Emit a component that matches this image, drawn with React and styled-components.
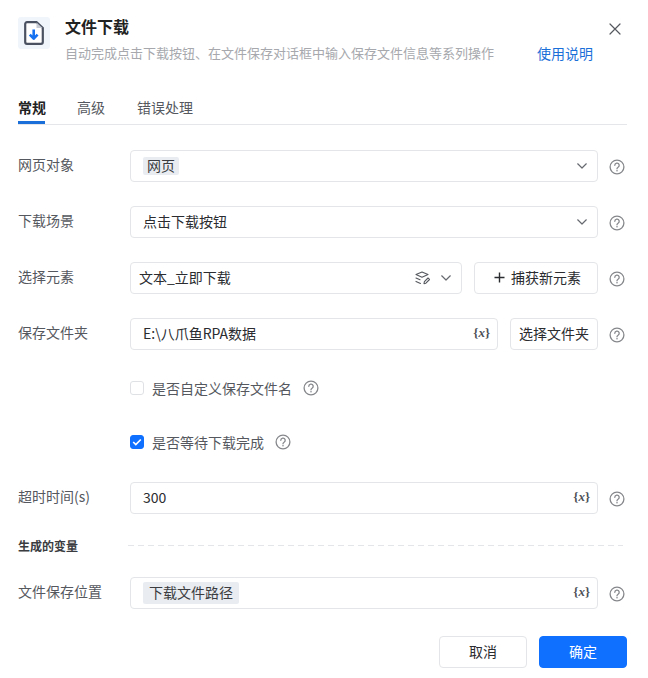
import React from "react";
import styled, { createGlobalStyle } from "styled-components";

const Global = createGlobalStyle`
  html, body { margin: 0; padding: 0; background: #fff; }
  body { font-family: "Noto Sans CJK SC", "Noto Sans", sans-serif; }
  * { box-sizing: border-box; }
`;

const Dialog = styled.div`
  width: 648px;
  height: 678px;
  padding: 0 21px 0 18px;
  display: flex;
  flex-direction: column;
  background: #fff;
`;

const Header = styled.div`
  display: flex;
  align-items: flex-start;
  height: 88px;
  padding-top: 17px;
`;

const LogoBox = styled.div`
  width: 32px;
  height: 32px;
  border-radius: 3px;
  background: #f0f5fc;
  display: flex;
  align-items: center;
  justify-content: center;
  flex: none;
`;

const HeaderText = styled.div`
  margin-left: 15px;
  flex: 1;
  min-width: 0;
`;

const Title = styled.div`
  margin-top: -1px;
  font-size: 16px;
  line-height: 20px;
  font-weight: 700;
  color: #222;
`;

const Desc = styled.div`
  margin-top: 8px;
  font-size: 13px;
  line-height: 18px;
  color: #a6a8ad;
  white-space: nowrap;
`;

const HelpLink = styled.a`
  position: absolute;
  left: 537px;
  top: 44px;
  font-size: 14px;
  line-height: 18px;
  color: #1a6fd8;
`;

const CloseButton = styled.button`
  position: absolute;
  left: 608px;
  top: 22px;
  width: 14px;
  height: 14px;
  padding: 0;
  border: 0;
  background: none;
  display: flex;
`;

const Tabs = styled.div`
  display: flex;
  gap: 32px;
  height: 37px;
  border-bottom: 1px solid #e4e6ea;
`;

const Tab = styled.div`
  height: 36px;
  width: ${(p) => (p.$active ? "27px" : "auto")};
  padding-top: 9px;
  font-size: 14px;
  line-height: 20px;
  white-space: nowrap;
  font-weight: ${(p) => (p.$active ? 700 : 400)};
  color: ${(p) => (p.$active ? "#222" : "#55585e")};
  border-bottom: ${(p) => (p.$active ? "3px solid #1a6fd8" : "0")};
`;

const Form = styled.div`
  display: flex;
  flex-direction: column;
  padding-top: 25px;
`;

const Row = styled.div`
  display: flex;
  align-items: center;
  height: 32px;
  margin-bottom: ${(p) => p.$gap ?? 24}px;
`;

const Label = styled.div`
  width: 112px;
  flex: none;
  font-size: 14px;
  line-height: 18px;
  margin-top: -5px;
  color: #55585e;
`;

const Field = styled.div`
  flex: 1;
  min-width: 0;
  height: 32px;
  border: 1px solid #e3e5e8;
  border-radius: 4px;
  display: flex;
  align-items: center;
  padding: 0 ${(p) => p.$right ?? 10}px 0 ${(p) => p.$left ?? 12}px;
  font-size: 14px;
  color: #2a2c30;
`;

const FieldText = styled.span`
  flex: 1;
  margin-top: -2px;
  white-space: nowrap;
`;

const Tag = styled.span`
  background: #e9ecf1;
  border-radius: 2px;
  padding: 0 ${(p) => (p.$big ? 6 : 4)}px;
  height: ${(p) => (p.$big ? 22 : 18)}px;
  line-height: ${(p) => (p.$big ? 20 : 16)}px;
  color: #3a3c40;
  font-size: 14px;
  margin-right: auto;
`;

const SideButton = styled.button`
  flex: none;
  width: ${(p) => p.$width}px;
  margin-left: 12px;
  height: 32px;
  border: 1px solid #e3e5e8;
  border-radius: 4px;
  background: #fff;
  padding: 0 0 2px;
  font-family: inherit;
  font-size: 14px;
  color: #2a2c30;
  display: flex;
  align-items: center;
  justify-content: center;
  gap: 6px;
`;

const HelpSlot = styled.div`
  flex: none;
  width: 29px;
  padding-left: 11px;
  padding-top: 2px;
  display: flex;
`;

const InlineHelp = styled.span`
  flex: none;
  margin-left: 11px;
  display: flex;
`;

const CheckRow = styled.div`
  display: flex;
  align-items: center;
  height: 20px;
  margin-left: 112px;
  margin-bottom: ${(p) => p.$gap}px;
  font-size: 14px;
  color: #55585e;
`;

const Box = styled.span`
  width: 14px;
  height: 14px;
  border-radius: 3px;
  flex: none;
  margin-right: 8px;
  border: 1px solid ${(p) => (p.$on ? "#0f6fff" : "#dfe1e5")};
  background: ${(p) => (p.$on ? "#0f6fff" : "#fff")};
  display: flex;
  align-items: center;
  justify-content: center;
`;

const SectionRow = styled.div`
  display: flex;
  align-items: center;
  height: 20px;
  margin-top: -1px;
  margin-bottom: 22px;
`;

const SectionTitle = styled.div`
  width: 110px;
  flex: none;
  font-size: 12px;
  font-weight: 700;
  color: #3a3c40;
`;

const Dashes = styled.div`
  flex: 1;
  margin-right: 4px;
  height: 1px;
  background: repeating-linear-gradient(90deg, #e3e5e8 0 6px, transparent 6px 10px);
`;

const Footer = styled.div`
  display: flex;
  justify-content: flex-end;
  gap: 12px;
  margin-top: 3px;
`;

const FootButton = styled.button`
  width: 88px;
  height: 32px;
  border-radius: 4px;
  font-family: inherit;
  font-size: 14px;
  padding: 0 0 2px;
  border: 1px solid ${(p) => (p.$primary ? "#0f6fff" : "#e3e5e8")};
  background: ${(p) => (p.$primary ? "#0f6fff" : "#fff")};
  color: ${(p) => (p.$primary ? "#fff" : "#2a2c30")};
`;

const VarMark = styled.span`
  flex: none;
  font-family: "Liberation Serif", serif;
  font-size: 13px;
  font-weight: 700;
  color: #4d5056;
  margin-top: -2px;
`;

const Help = () => (
  <svg width="16" height="16" viewBox="0 0 16 16" fill="none">
    <circle cx="8" cy="8" r="6.9" stroke="#85878b" strokeWidth="1.3" />
    <path d="M5.8 6.3a2.2 2.2 0 1 1 3.3 1.9c-.7.4-1.1.8-1.1 1.6" stroke="#85878b" strokeWidth="1.3" strokeLinecap="round" />
    <circle cx="8" cy="11.7" r=".8" fill="#85878b" />
  </svg>
);

const Chevron = () => (
  <svg width="10" height="6" viewBox="0 0 10 6" fill="none" style={{ flex: "none" }}>
    <path d="M.7.8 5 5l4.3-4.2" stroke="#666a70" strokeWidth="1.2" strokeLinecap="round" strokeLinejoin="round" />
  </svg>
);

const FileLogo = () => (
  <svg width="20" height="24" viewBox="0 0 20 24" fill="none">
    <path d="M3 1.2h9.5L18.8 7v14a1.8 1.8 0 0 1-1.8 1.8H3A1.8 1.8 0 0 1 1.2 21V3A1.8 1.8 0 0 1 3 1.2Z" stroke="#4a5160" strokeWidth="2.2" fill="#fff" />
    <path d="M12.5 1.5V7h6" fill="#c5cad3" />
    <path d="M9.7 8.5v9.5M5.8 13.7l3.9 4 3.9-4" stroke="#1672f0" strokeWidth="2.6" strokeLinejoin="round" />
  </svg>
);

const LayersPick = () => (
  <svg width="16" height="14" viewBox="0 0 16 14" fill="none" style={{ flex: "none", marginRight: 10 }}>
    <path d="M1 3.6 7 1l6 2.6-6 2.6-6-2.6Z" stroke="#55585e" strokeWidth="1.1" strokeLinejoin="round" />
    <path d="M1 7l4 1.8M1 10.4l4.5 2" stroke="#55585e" strokeWidth="1.1" strokeLinecap="round" />
    <path d="m9 12.6.4-2 3.6-3.6 1.5 1.5-3.6 3.7-1.9.4Z" stroke="#55585e" strokeWidth="1.1" strokeLinejoin="round" />
  </svg>
);

const Var = () => (
  <VarMark>{"{"}<i>x</i>{"}"}</VarMark>
);

export default function App() {
  return (
    <>
      <Global />
      <Dialog>
        <Header>
          <LogoBox><FileLogo /></LogoBox>
          <HeaderText>
            <Title>文件下载</Title>
            <Desc>自动完成点击下载按钮、在文件保存对话框中输入保存文件信息等系列操作</Desc>
          </HeaderText>
          <HelpLink>使用说明</HelpLink>
          <CloseButton>
            <svg width="14" height="14" viewBox="0 0 14 14" fill="none">
              <path d="m2 2 10 10M12 2 2 12" stroke="#55585e" strokeWidth="1.2" strokeLinecap="round" />
            </svg>
          </CloseButton>
        </Header>
        <Tabs>
          <Tab $active>常规</Tab>
          <Tab>高级</Tab>
          <Tab>错误处理</Tab>
        </Tabs>
        <Form>
          <Row>
            <Label>网页对象</Label>
            <Field>
              <Tag>网页</Tag>
              <Chevron />
            </Field>
            <HelpSlot><Help /></HelpSlot>
          </Row>
          <Row>
            <Label>下载场景</Label>
            <Field>
              <FieldText>点击下载按钮</FieldText>
              <Chevron />
            </Field>
            <HelpSlot><Help /></HelpSlot>
          </Row>
          <Row>
            <Label>选择元素</Label>
            <Field $left={8}>
              <FieldText>文本_立即下载</FieldText>
              <LayersPick />
              <Chevron />
            </Field>
            <SideButton $width={124}>
              <svg width="11" height="11" viewBox="0 0 11 11" fill="none" style={{ marginLeft: 3 }}>
                <path d="M5.5.5v10M.5 5.5h10" stroke="#2a2c30" strokeWidth="1.4" />
              </svg>
              捕获新元素
            </SideButton>
            <HelpSlot><Help /></HelpSlot>
          </Row>
          <Row $gap={28}>
            <Label>保存文件夹</Label>
            <Field $right={7}>
              <FieldText>E:\八爪鱼RPA数据</FieldText>
              <Var />
            </Field>
            <SideButton $width={88}>选择文件夹</SideButton>
            <HelpSlot><Help /></HelpSlot>
          </Row>
          <CheckRow $gap={34}>
            <Box />
            是否自定义保存文件名
            <InlineHelp><Help /></InlineHelp>
          </CheckRow>
          <CheckRow $gap={30}>
            <Box $on>
              <svg width="10" height="8" viewBox="0 0 10 8" fill="none">
                <path d="m1.2 4 2.6 2.5 5-5" stroke="#fff" strokeWidth="1.7" />
              </svg>
            </Box>
            是否等待下载完成
            <InlineHelp><Help /></InlineHelp>
          </CheckRow>
          <Row $gap={22}>
            <Label>超时时间(s)</Label>
            <Field $right={7}>
              <FieldText>300</FieldText>
              <Var />
            </Field>
            <HelpSlot><Help /></HelpSlot>
          </Row>
          <SectionRow>
            <SectionTitle>生成的变量</SectionTitle>
            <Dashes />
          </SectionRow>
          <Row>
            <Label>文件保存位置</Label>
            <Field $right={7}>
              <Tag $big>下载文件路径</Tag>
              <Var />
            </Field>
            <HelpSlot><Help /></HelpSlot>
          </Row>
        </Form>
        <Footer>
          <FootButton>取消</FootButton>
          <FootButton $primary>确定</FootButton>
        </Footer>
      </Dialog>
    </>
  );
}
